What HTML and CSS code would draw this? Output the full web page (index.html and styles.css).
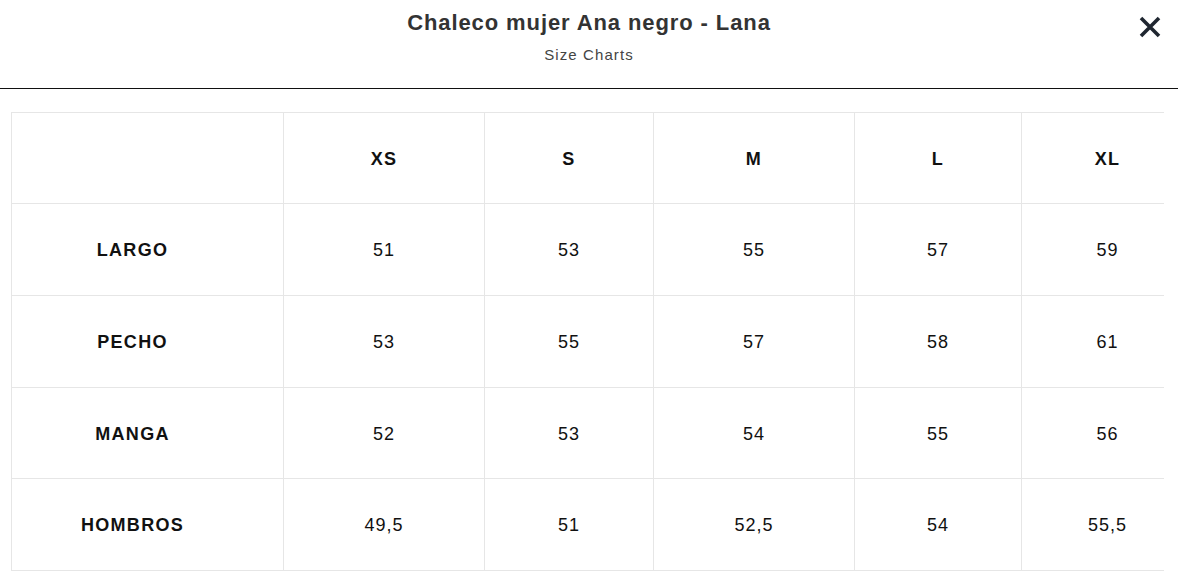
FILE: index.html
```html
<!DOCTYPE html>
<html lang="es">
<head>
<meta charset="utf-8">
<title>Size Charts</title>
<link rel="stylesheet" href="styles.css">
</head>
<body>
<header class="modal-header">
  <h1 class="title">Chaleco mujer Ana negro - Lana</h1>
  <p class="subtitle">Size Charts</p>
  <button class="close" aria-label="Cerrar">
    <svg width="22" height="22" viewBox="0 0 22 22"><path d="M2 2 L20 20 M20 2 L2 20" stroke="#1f2630" stroke-width="3.6" stroke-linecap="butt" fill="none"/></svg>
  </button>
</header>
<div class="table-wrap">
  <div class="chart">
    <div class="cell label"></div>
    <div class="cell head">XS</div>
    <div class="cell head">S</div>
    <div class="cell head">M</div>
    <div class="cell head">L</div>
    <div class="cell head">XL</div>

    <div class="cell label">LARGO</div>
    <div class="cell">51</div>
    <div class="cell">53</div>
    <div class="cell">55</div>
    <div class="cell">57</div>
    <div class="cell">59</div>

    <div class="cell label">PECHO</div>
    <div class="cell">53</div>
    <div class="cell">55</div>
    <div class="cell">57</div>
    <div class="cell">58</div>
    <div class="cell">61</div>

    <div class="cell label">MANGA</div>
    <div class="cell">52</div>
    <div class="cell">53</div>
    <div class="cell">54</div>
    <div class="cell">55</div>
    <div class="cell">56</div>

    <div class="cell label">HOMBROS</div>
    <div class="cell">49,5</div>
    <div class="cell">51</div>
    <div class="cell">52,5</div>
    <div class="cell">54</div>
    <div class="cell">55,5</div>
  </div>
</div>
</body>
</html>
```
FILE: styles.css
```css
* { box-sizing: border-box; }
html, body { margin: 0; padding: 0; background: #fff; }
body {
  font-family: "Liberation Sans", Arial, sans-serif;
  color: #111;
  width: 1178px;
  overflow: hidden;
}
.modal-header {
  position: relative;
  height: 89px;
  border-bottom: 1px solid #111;
  text-align: center;
  padding-top: 8px;
}
.title {
  margin: 0;
  font-size: 22px;
  line-height: 30px;
  font-weight: 700;
  color: #333;
  letter-spacing: 0.9px;
}
.subtitle {
  margin: 7px 0 0;
  font-size: 15px;
  line-height: 20px;
  color: #444;
  letter-spacing: 1.1px;
}
.close {
  position: absolute;
  top: 16px;
  left: 1139px;
  width: 22px;
  height: 22px;
  padding: 0;
  border: 0;
  background: none;
  display: block;
}
.close svg { display: block; }
.table-wrap {
  margin: 23px 0 0 11px;
  width: 1153px;
  overflow: hidden;
}
.chart {
  display: grid;
  grid-template-columns: 272px 201px 169px 201px 167px 172px;
  grid-template-rows: 91px 92px 92px 91px 92px;
  width: max-content;
  border-top: 1px solid #e6e6e6;
  border-left: 1px solid #e6e6e6;
}
.cell {
  display: flex;
  align-items: center;
  justify-content: center;
  padding-top: 2px;
  border-right: 1px solid #e6e6e6;
  border-bottom: 1px solid #e6e6e6;
  font-size: 18px;
  letter-spacing: 1px;
  color: #111;
}
.head, .label {
  font-weight: 700;
  letter-spacing: 1.3px;
}
.label { padding-right: 30px; }
```
